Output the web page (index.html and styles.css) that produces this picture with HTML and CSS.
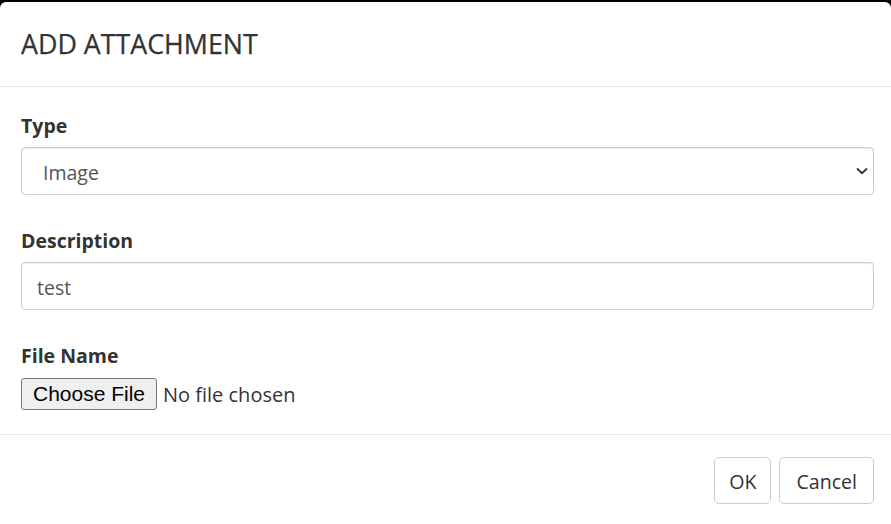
FILE: index.html
```html
<!DOCTYPE html>
<html>
<head>
<meta charset="utf-8">
<link rel="stylesheet" href="styles.css">
</head>
<body>
<div class="modal">
  <div class="modal-header">
    <h4 class="modal-title">ADD ATTACHMENT</h4>
  </div>
  <div class="modal-body">
    <div class="form-group">
      <label class="control-label">Type</label>
      <div class="form-control select">
        <span class="select-value">Image</span>
        <svg class="chevron" width="12" height="8" viewBox="0 0 12 8"><path d="M1 1.5 L6 6.2 L11 1.5" fill="none" stroke="#333" stroke-width="1.8"/></svg>
      </div>
    </div>
    <div class="form-group">
      <label class="control-label">Description</label>
      <div class="form-control input">test</div>
    </div>
    <div class="form-group last">
      <label class="control-label">File Name</label>
      <div class="file-row">
        <span class="file-button">Choose File</span>
        <span class="file-status">No file chosen</span>
      </div>
    </div>
  </div>
  <div class="modal-footer">
    <button class="btn">OK</button>
    <button class="btn">Cancel</button>
  </div>
</div>
</body>
</html>
```

FILE: styles.css
```css
html, body {
  margin: 0;
  padding: 0;
  background: #000;
  height: 100%;
  overflow: hidden;
}
.modal {
  margin-top: 2px;
  background: #fff;
  border-radius: 6px 6px 0 0;
  height: 522px;
  font-family: "Open Sans", "Noto Sans", sans-serif;
  color: #333;
}
.modal-header {
  height: 84px;
  padding: 0 21px;
  display: flex;
  align-items: center;
  border-bottom: 1px solid #e5e5e5;
}
.modal-title {
  margin: 0;
  font-size: 26.8px;
  font-weight: 400;
  line-height: 30px;
  color: #333;
  -webkit-text-stroke: 0.25px #333;
}
.modal-body {
  padding: 26px 17px 24px 21px;
  border-bottom: 1px solid #e5e5e5;
}
.form-group {
  display: flex;
  flex-direction: column;
  margin-bottom: 33px;
}
.form-group.last {
  margin-bottom: 0;
}
.control-label {
  font-size: 19.5px;
  font-weight: 700;
  line-height: 26px;
  margin-bottom: 8px;
}
.form-control {
  box-sizing: border-box;
  height: 48px;
  border: 1px solid #ccc;
  border-radius: 4px;
  font-size: 19.5px;
  color: #555;
  display: flex;
  align-items: center;
  padding-top: 2px;
  box-shadow: inset 0 1px 1px rgba(0,0,0,.075);
}
.select {
  justify-content: space-between;
  padding-left: 21px;
  padding-right: 5px;
}
.input {
  padding-left: 15px;
  padding-right: 15px;
}
.chevron {
  display: block;
  margin-top: -2px;
}
.file-row {
  display: flex;
  align-items: center;
  height: 32px;
  margin-top: 1px;
}
.file-button {
  box-sizing: border-box;
  height: 32px;
  width: 136px;
  display: flex;
  align-items: center;
  justify-content: center;
  background: #efefef;
  border: 1px solid #767676;
  border-radius: 3px;
  font-family: "Liberation Sans", Arial, sans-serif;
  font-size: 21px;
  color: #000;
}
.file-status {
  margin-left: 6px;
  font-size: 20px;
  color: #333;
}
.modal-footer {
  display: flex;
  justify-content: flex-end;
  gap: 8px;
  padding: 22px 17px 0 0;
}
.btn {
  box-sizing: border-box;
  height: 47px;
  padding: 2px 16px 0;
  background: #fff;
  border: 1px solid #ccc;
  border-radius: 5px;
  font-family: "Open Sans", "Noto Sans", sans-serif;
  font-size: 19.6px;
  color: #333;
}
.btn:first-child {
  padding: 2px 14px 0;
}
```
